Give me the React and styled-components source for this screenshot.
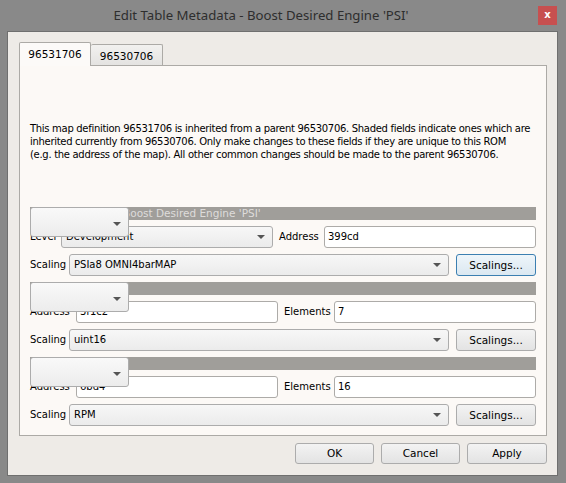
import styled, { createGlobalStyle } from 'styled-components'

const GlobalStyle = createGlobalStyle`
  html, body {
    margin: 0;
    padding: 0;
    background: #898989;
  }
  body {
    font-family: "DejaVu Sans", "Liberation Sans", sans-serif;
    font-size: 10px;
    color: #000;
  }
`

const Window = styled.div`
  width: 566px;
  height: 483px;
  box-sizing: border-box;
  background: #898989;
  display: flex;
  flex-direction: column;
  padding: 0 8px 7px 7px;
`

const TitleBar = styled.div`
  height: 31px;
  display: flex;
  align-items: flex-start;
  margin-right: -8px;
`

const Title = styled.div`
  flex: 1;
  text-align: center;
  padding-right: 23px;
  font-family: "Noto Sans", "Open Sans", sans-serif;
  font-size: 13.2px;
  line-height: 31px;
  color: #2e2e2e;
`

const CloseButton = styled.div`
  width: 19px;
  height: 19px;
  margin: 6px 9px 0 0;
  background: #c75050;
  color: #fff;
  font: bold 10px "DejaVu Sans", sans-serif;
  line-height: 18px;
  text-align: center;
`

const Client = styled.div`
  flex: 1;
  border: 1px solid #6f6f6f;
  background: #eeebe7;
  padding: 10px 10px 11px 11px;
  display: flex;
  flex-direction: column;
`

const TabBar = styled.div`
  height: 23px;
  display: flex;
  align-items: flex-end;
`

const Tab = styled.div`
  box-sizing: border-box;
  width: 72px;
  height: ${({ $active }) => ($active ? '24px' : '21px')};
  margin-bottom: ${({ $active }) => ($active ? '-1px' : '0')};
  position: relative;
  z-index: ${({ $active }) => ($active ? 1 : 0)};
  border: 1px solid #acaaa6;
  border-bottom: none;
  border-left: ${({ $first }) => ($first ? '1px solid #acaaa6' : 'none')};
  border-radius: 2px 2px 0 0;
  background: ${({ $active }) =>
    $active ? '#fcfaf8' : 'linear-gradient(#f2f1ef, #e4e3e1)'};
  text-align: center;
  font-size: 10.5px;
  line-height: ${({ $active }) => ($active ? '23px' : '22px')};
`

const Pane = styled.div`
  box-sizing: border-box;
  height: 371px;
  border: 1px solid #acaaa6;
  background: #fcf9f6;
  padding: 56px 10px 9px 10px;
  display: flex;
  flex-direction: column;
`

const Note = styled.p`
  margin: 0 0 46px 0;
  font-size: 10px;
  letter-spacing: -0.3px;
  line-height: 13px;
  white-space: nowrap;
`

const Section = styled.div`
  position: relative;
  display: flex;
  flex-direction: column;
  gap: 6px;
  margin-bottom: 6px;
`

const SectionBar = styled.div`
  height: 13px;
  background: #a09e9a;
  color: #dedcda;
  font-size: 10.5px;
  line-height: 13px;
  padding-left: 93px;
  white-space: nowrap;
  overflow: hidden;
`

const FieldRow = styled.div`
  display: grid;
  grid-template-columns: ${({ $cols }) => $cols};
  column-gap: 6px;
  align-items: center;
  height: 22px;
`

const Label = styled.span`
  white-space: nowrap;
  line-height: 22px;
`

const TextBox = styled.div`
  box-sizing: border-box;
  height: 22px;
  background: #fff;
  border: 1px solid #adaba8;
  border-radius: 3px;
  padding: 0 3px;
  line-height: 20px;
  white-space: nowrap;
`

const Combo = styled.div`
  box-sizing: border-box;
  height: 22px;
  position: relative;
  background: linear-gradient(#f7f7f7, #ebebeb);
  border: 1px solid #acacac;
  border-radius: 3px;
  padding: 0 4px;
  line-height: 20px;
  white-space: nowrap;
  &::after {
    content: '';
    position: absolute;
    right: 7px;
    top: 50%;
    margin-top: -2px;
    border-left: 4px solid transparent;
    border-right: 4px solid transparent;
    border-top: 4px solid #555;
  }
`

const FloatingCombo = styled(Combo)`
  position: absolute;
  left: 0;
  top: 0;
  width: 99px;
  height: 30px;
  z-index: 2;
  background: linear-gradient(#f9f9f9, #ececec);
  &::after {
    margin-top: 0;
  }
`

const PushButton = styled.div`
  box-sizing: border-box;
  width: ${({ $w }) => $w || '80px'};
  justify-self: end;
  height: ${({ $h }) => $h || '22px'};
  border: 1px solid ${({ $default }) => ($default ? '#3c7fb1' : '#acacac')};
  border-radius: 3px;
  background: ${({ $default }) =>
    $default
      ? 'linear-gradient(#eef5fa, #dbe8f1)'
      : 'linear-gradient(#f3f3f3, #e3e3e3)'};
  text-align: center;
  font-size: 10.5px;
  line-height: ${({ $h }) => ($h ? `calc(${$h} - 2px)` : '20px')};
  white-space: nowrap;
`

const ButtonRow = styled.div`
  margin-top: 7px;
  display: flex;
  justify-content: flex-end;
  gap: 7px;
`

const sections = [
  {
    title: "Boost Desired Engine 'PSI'",
    cols: '25px 1fr 39px 1fr',
    first: { label: 'Level', value: 'Development', combo: true },
    second: { label: 'Address', value: '399cd' },
    scaling: 'PSIa8 OMNI4barMAP',
    isDefault: true,
  },
  {
    title: '',
    cols: '40px 1fr 44px 1fr',
    first: { label: 'Address', value: '3f1c2' },
    second: { label: 'Elements', value: '7' },
    scaling: 'uint16',
  },
  {
    title: '',
    cols: '40px 1fr 44px 1fr',
    first: { label: 'Address', value: '6bd4' },
    second: { label: 'Elements', value: '16' },
    scaling: 'RPM',
  },
]

function TableSection({ s }) {
  return (
    <Section>
      <FloatingCombo />
      <SectionBar>{s.title}</SectionBar>
      <FieldRow $cols={s.cols}>
        <Label>{s.first.label}</Label>
        {s.first.combo ? <Combo>{s.first.value}</Combo> : <TextBox>{s.first.value}</TextBox>}
        <Label>{s.second.label}</Label>
        <TextBox>{s.second.value}</TextBox>
      </FieldRow>
      <FieldRow $cols="33px 1fr 81px">
        <Label>Scaling</Label>
        <Combo>{s.scaling}</Combo>
        <PushButton $default={s.isDefault}>Scalings...</PushButton>
      </FieldRow>
    </Section>
  )
}

export default function App() {
  return (
    <>
      <GlobalStyle />
      <Window>
        <TitleBar>
          <Title>Edit Table Metadata - Boost Desired Engine 'PSI'</Title>
          <CloseButton>x</CloseButton>
        </TitleBar>
        <Client>
          <TabBar>
            <Tab $active $first>96531706</Tab>
            <Tab>96530706</Tab>
          </TabBar>
          <Pane>
            <Note>
              This map definition 96531706 is inherited from a parent 96530706. Shaded fields indicate ones which are
              <br />
              inherited currently from 96530706. Only make changes to these fields if they are unique to this ROM
              <br />
              (e.g. the address of the map). All other common changes should be made to the parent 96530706.
            </Note>
            {sections.map((s, i) => (
              <TableSection key={i} s={s} />
            ))}
          </Pane>
          <ButtonRow>
            <PushButton $h="21px" $w="79px">OK</PushButton>
            <PushButton $h="21px" $w="79px">Cancel</PushButton>
            <PushButton $h="21px" $w="80px">Apply</PushButton>
          </ButtonRow>
        </Client>
      </Window>
    </>
  )
}
